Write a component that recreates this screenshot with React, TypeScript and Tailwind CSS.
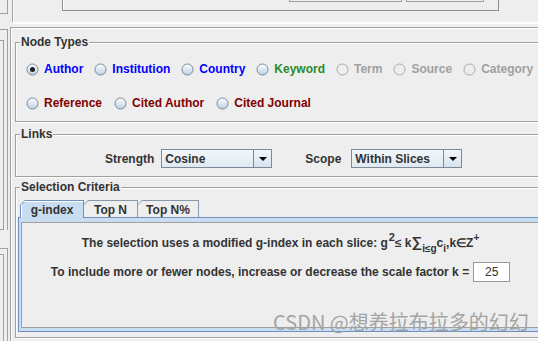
import React from "react";

type Item = { label: string; color: string; checked?: boolean; disabled?: boolean };

const ROW1: Item[] = [
  { label: "Author", color: "text-[#0000ff]", checked: true },
  { label: "Institution", color: "text-[#0000ff]" },
  { label: "Country", color: "text-[#0000ff]" },
  { label: "Keyword", color: "text-[#2a8a2a]" },
  { label: "Term", color: "text-[#a0a0a0]", disabled: true },
  { label: "Source", color: "text-[#a0a0a0]", disabled: true },
  { label: "Category", color: "text-[#a0a0a0]", disabled: true },
];

const ROW2: Item[] = [
  { label: "Reference", color: "text-[#800000]" },
  { label: "Cited Author", color: "text-[#800000]" },
  { label: "Cited Journal", color: "text-[#800000]" },
];

function Radio({ checked, disabled }: { checked?: boolean; disabled?: boolean }) {
  return (
    <svg width="13" height="13" viewBox="0 0 13 13" className="shrink-0">
      <defs>
        <linearGradient id="radioFill" x1="0" y1="0" x2="0" y2="1">
          <stop offset="0" stopColor="#ffffff" />
          <stop offset="1" stopColor="#bccfe2" />
        </linearGradient>
      </defs>
      <circle
        cx="6.5"
        cy="6.5"
        r="5.5"
        fill={disabled ? "none" : "url(#radioFill)"}
        stroke={disabled ? "#a8a8a8" : "#7a8a99"}
      />
      {checked && <circle cx="6.5" cy="6.5" r="2.5" fill="#222222" />}
    </svg>
  );
}

function RadioItem({ item }: { item: Item }) {
  return (
    <div className="flex items-center gap-[5px]">
      <Radio checked={item.checked} disabled={item.disabled} />
      <span className={`font-bold ${item.color}`}>{item.label}</span>
    </div>
  );
}

function Group({
  title,
  className,
  children,
}: {
  title: string;
  className?: string;
  children: React.ReactNode;
}) {
  return (
    <div
      className={`border border-[#a0a0a0] shadow-[inset_1px_1px_0_#fff,1px_1px_0_#fff] ${className ?? ""}`}
    >
      <div className="-mt-[8px] flex pl-[4px]">
        <span className="bg-[#eeeeee] px-[1px] text-[12px] font-bold leading-[15px] text-[#333333]">
          {title}
        </span>
      </div>
      {children}
    </div>
  );
}

function Combo({ value }: { value: string }) {
  return (
    <div className="flex h-[19px] w-[111px] border border-[#7a8a99]">
      <div className="flex flex-1 items-center bg-gradient-to-b from-[#f3f7fb] to-[#dfe8f1] pl-[3px] font-bold">
        {value}
      </div>
      <div className="flex w-[18px] items-center justify-center border-l border-[#7a8a99] bg-gradient-to-b from-[#f3f7fb] to-[#d6e2ee]">
        <svg width="8" height="4" viewBox="0 0 8 4">
          <polygon points="0,0 8,0 4,4" fill="#000000" />
        </svg>
      </div>
    </div>
  );
}

function Tab({ label, width, selected }: { label: string; width: string; selected?: boolean }) {
  return (
    <div
      className={`${width} ${
        selected ? "relative z-10 -mb-[1px] h-[18px] bg-[#6f8fc2]" : "-ml-[1px] h-[17px] bg-[#8898aa]"
      } [clip-path:polygon(5px_0,100%_0,100%_100%,0_100%,0_5px)]`}
    >
      <div
        className={`mx-[1px] mt-[1px] flex h-full items-center justify-center font-bold [clip-path:polygon(4px_0,100%_0,100%_100%,0_100%,0_4px)] ${
          selected ? "bg-[#c8ddf2] shadow-[inset_1px_1px_0_#fff]" : "bg-[#eeeeee]"
        }`}
      >
        {label}
      </div>
    </div>
  );
}

export default function App() {
  return (
    <div className="relative flex h-[341px] w-[538px] overflow-hidden bg-[#eeeeee] font-['Liberation_Sans',Arial,sans-serif] text-[12px] text-[#333333]">
      {/* left edge panels */}
      <div className="flex w-[10px] shrink-0 flex-col">
        <div className="h-[14px] w-[8px] border-b border-r border-[#a0a0a0]" />
        <div className="mt-[15px] flex h-[201px] w-[8px] flex-col border-r border-t border-[#a0a0a0]">
          <div className="mt-[10px] w-[4px] flex-1 border-b border-r border-t border-[#a0a0a0]" />
        </div>
        <div className="mt-[18px] flex w-[8px] flex-1 flex-col border-r border-t border-[#a0a0a0]">
          <div className="mt-[5px] w-[4px] flex-1 border-r border-t border-[#a0a0a0]" />
        </div>
      </div>

      <div className="flex w-[540px] shrink-0 flex-col">
        {/* top strip */}
        <div className="flex h-[27px] flex-col">
          <div className="ml-[2px] flex h-[22px] items-start border-l border-[#a0a0a0] shadow-[inset_1px_0_0_#fff]">
            <div className="ml-[49px] flex h-[11px] w-[437px] items-start border-x border-b border-[#8e8e8e] shadow-[inset_1px_0_0_#fff]">
              <div className="ml-[226px] h-[2px] w-[113px] border-x border-b border-[#a0a0a0]" />
              <div className="ml-[4px] h-[2px] w-[78px] border-x border-b border-[#a0a0a0]" />
            </div>
          </div>
          <div className="ml-[3px] h-[2px] bg-white" />
        </div>

        {/* main panel */}
        <div className="flex flex-1 flex-col border-l border-t border-[#a0a0a0] px-[4px] shadow-[inset_1px_1px_0_#fff]">
          <Group title="Node Types" className="mt-[14px] pb-[8px]">
            <div className="mt-[9px] flex h-[20px] items-center gap-[11px] pl-[10px]">
              {ROW1.map((it) => (
                <RadioItem key={it.label} item={it} />
              ))}
            </div>
            <div className="mt-[14px] flex h-[20px] items-center gap-[12px] pl-[10px]">
              {ROW2.map((it) => (
                <RadioItem key={it.label} item={it} />
              ))}
            </div>
          </Group>

          <Group title="Links" className="mt-[12px] pb-[8px]">
            <div className="mt-[7px] flex h-[19px] items-center pl-[89px]">
              <span className="font-bold">Strength</span>
              <div className="ml-[7px]">
                <Combo value="Cosine" />
              </div>
              <span className="ml-[33px] font-bold">Scope</span>
              <div className="ml-[10px]">
                <Combo value="Within Slices" />
              </div>
            </div>
          </Group>

          <Group title="Selection Criteria" className="mt-[10px] pb-[5px]">
            <div className="mx-[2px] mt-[5px] flex flex-col">
              {/* tabs */}
              <div className="flex items-end pl-[2px]">
                <Tab label="g-index" width="w-[64px]" selected />
                <Tab label="Top N" width="w-[55px]" />
                <Tab label="Top N%" width="w-[62px]" />
              </div>
              {/* content */}
              <div className="border border-[#6f8fc2] bg-[#c8ddf2] px-[2px] pb-[3px] pt-[4px]">
                <div className="flex h-[106px] flex-col border border-[#a0a0a0] bg-[#eeeeee] font-bold">
                  <div className="mt-[9px] h-[20px] text-center leading-[20px]">
                    The selection uses a modified g-index in each slice: g
                    <sup className="-top-[6px] ml-[1px] text-[11px]">2</sup>≤ k
                    <span className="text-[15px]">∑</span>
                    <sub className="-bottom-[5px] text-[10px]">i≤g</sub>c
                    <sub className="-bottom-[5px] text-[10px]">i</sub>,k∈Z
                    <sup className="-top-[6px] text-[10px]">+</sup>
                  </div>
                  <div className="mt-[10px] flex h-[20px] items-center justify-center">
                    <span>To include more or fewer nodes, increase or decrease the scale factor k =</span>
                    <div className="ml-[4px] flex h-[20px] w-[37px] items-center justify-center border border-[#9a9a9a] bg-white font-normal">
                      25
                    </div>
                  </div>
                </div>
              </div>
            </div>
          </Group>
        </div>
      </div>

      {/* watermark */}
      <div className="pointer-events-none absolute left-[273px] top-[312px] whitespace-nowrap font-['Noto_Sans_CJK_SC',sans-serif] text-[20px] leading-none text-[#a4a4a4]">
        CSDN @想养拉布拉多的幻幻
      </div>
    </div>
  );
}
